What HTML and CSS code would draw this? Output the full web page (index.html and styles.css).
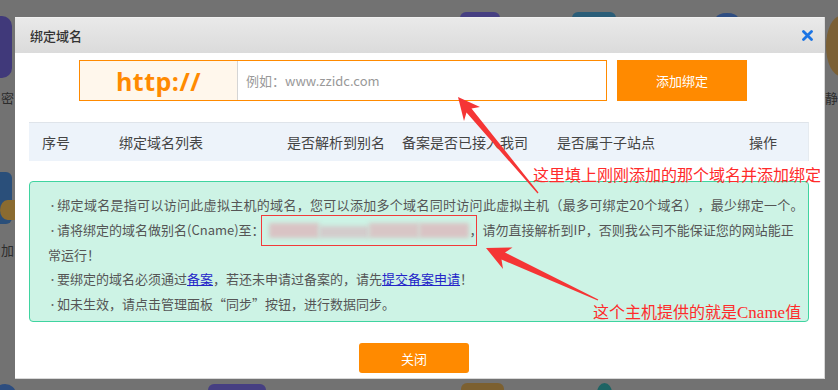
FILE: index.html
```html
<!DOCTYPE html>
<html lang="zh-CN">
<head>
  <meta charset="UTF-8">
  <title>绑定域名</title>
  <link rel="stylesheet" href="styles.css">
</head>
<body>
  <div class="page">
    <!-- dimmed panel icons behind the modal -->
    <div class="backdrop">
      <span class="bg-icon bg-purple-left"></span>
      <span class="bg-text bg-text-mi">密</span>
      <span class="bg-icon bg-blue-left"></span>
      <span class="bg-icon bg-yellow-left"></span>
      <span class="bg-text bg-text-jia">加</span>
      <span class="bg-icon bg-purple-top"></span>
      <span class="bg-icon bg-teal-top"></span>
      <span class="bg-icon bg-blue-top"></span>
      <span class="bg-icon bg-brown-right"></span>
      <span class="bg-text bg-text-jing">静</span>
      <span class="bg-icon bg-blue-bottom"></span>
      <span class="bg-icon bg-purple-bottom"></span>
      <span class="bg-icon bg-brown-bottom"></span>
      <span class="bg-icon bg-teal-bottom"></span>
    </div>

    <div class="dialog">
      <div class="dlg-head">
        <span class="dlg-title">绑定域名</span>
        <svg class="dlg-close" width="11" height="11" viewBox="0 0 11 11">
          <path d="M1.5 1.5 L9.5 9.5 M9.5 1.5 L1.5 9.5" stroke="#1b74e4" stroke-width="2.8" stroke-linecap="round"/>
        </svg>
      </div>

      <div class="dlg-body">
        <div class="bind-row">
          <div class="domain-input">
            <span class="prefix">http://</span>
            <span class="placeholder">例如：www.zzidc.com</span>
          </div>
          <button class="btn-orange btn-add">添加绑定</button>
        </div>

        <div class="list-head">
          <span>序号</span>
          <span>绑定域名列表</span>
          <span>是否解析到别名</span>
          <span>备案是否已接入我司</span>
          <span>是否属于子站点</span>
          <span>操作</span>
        </div>

        <div class="tips">
          <p class="wide"><i class="dot">•</i>绑定域名是指可以访问此虚拟主机的域名，您可以添加多个域名同时访问此虚拟主机（最多可绑定20个域名），最少绑定一个。</p>
          <p><i class="dot">•</i>请将绑定的域名做别名(Cname)至：<span class="cname"><b></b><b></b><b></b><b></b></span>，请勿直接解析到IP，否则我公司不能保证您的网站能正<br>常运行！</p>
          <p><i class="dot">•</i>要绑定的域名必须通过<a href="#">备案</a>，若还未申请过备案的，请先<a href="#">提交备案申请</a>！</p>
          <p><i class="dot">•</i>如未生效，请点击管理面板“同步”按钮，进行数据同步。</p>
        </div>

        <div class="dlg-foot">
          <button class="btn-orange btn-close">关闭</button>
        </div>
      </div>
    </div>

    <!-- red annotations drawn over the screenshot -->
    <svg class="arrows" width="838" height="390" viewBox="0 0 838 390">
      <polygon fill="#f53535" points="458,97 480,107 471.5,108.5 538.5,192.5 537.5,193.5 466.5,112.5 464,121"/>
      <polygon fill="#f53535" points="486,248 512.5,247.5 505,252.5 598.3,299.4 597.7,300.6 501.5,259.5 503,269"/>
    </svg>
    <div class="note note-top">这里填上刚刚添加的那个域名并添加绑定</div>
    <div class="note note-bottom">这个主机提供的就是<span class="latin">Cname</span>值</div>
  </div>
</body>
</html>
```

FILE: styles.css
```css
* {
  box-sizing: border-box;
  margin: 0;
  padding: 0;
}

body {
  background: #727272;
  font-family: "Noto Sans CJK SC", "Noto Sans", sans-serif;
  color: #333;
  text-spacing-trim: space-all;
}

.page {
  position: relative;
  width: 838px;
  height: 390px;
  overflow: hidden;
}

/* background panel, already dimmed by the mask */
.bg-icon,
.bg-text {
  position: absolute;
}

.bg-icon {
  border-radius: 6px;
}

.bg-text {
  font-size: 13px;
  line-height: 15px;
  color: #2c2c2c;
}

.bg-purple-left { left: -10px; top: 16px; width: 22px; height: 62px; background: #40397a; border-radius: 10px; }
.bg-text-mi { left: 1px; top: 90px; }
.bg-blue-left { left: -8px; top: 172px; width: 20px; height: 52px; background: #2a4f7a; }
.bg-yellow-left { left: 0; top: 200px; width: 15px; height: 20px; background: #8a6b30; border-radius: 50% 0 0 50%; }
.bg-text-jia { left: 1px; top: 242px; }
.bg-purple-top { left: 460px; top: 12px; width: 40px; height: 14px; background: #463f82; }
.bg-teal-top { left: 572px; top: 12px; width: 44px; height: 14px; background: #2a5d78; }
.bg-blue-top { left: 716px; top: 13px; width: 22px; height: 10px; background: #2e4d82; border-radius: 50% 50% 0 0; }
.bg-brown-right { left: 826px; top: 16px; width: 30px; height: 60px; background: #7b6035; border-radius: 50%; }
.bg-text-jing { left: 825px; top: 90px; }
.bg-blue-bottom { left: -6px; top: 384px; width: 22px; height: 20px; background: #2d4d7f; border-radius: 50%; }
.bg-purple-bottom { left: 208px; top: 384px; width: 58px; height: 20px; background: #463f82; }
.bg-brown-bottom { left: 461px; top: 383px; width: 43px; height: 20px; background: #7c6030; }
.bg-teal-bottom { left: 597px; top: 383px; width: 15px; height: 20px; background: #1e6464; border-radius: 50%; }

/* modal */
.dialog {
  position: absolute;
  left: 15px;
  top: 17px;
  width: 810px;
  height: 362px;
  background: #fff;
  border-right: 1px solid #d8d8d8;
  border-bottom: 1px solid #d8d8d8;
}

.dlg-head {
  height: 36px;
  padding: 0 11px 0 15px;
  display: flex;
  justify-content: space-between;
  align-items: center;
  background: linear-gradient(#e9e9e9, #dbdbdb);
  border-top: 1px solid #f0f0f0;
}

.dlg-title {
  font-size: 13px;
  font-weight: 500;
  color: #333;
}

.dlg-body {
  padding: 7px 15px 0 14px;
}

.bind-row {
  display: flex;
  gap: 10px;
  margin-left: 50px;
}

.domain-input {
  width: 528px;
  height: 41px;
  border: 1px solid #ff8a00;
  display: flex;
  align-items: center;
}

.prefix {
  width: 158px;
  height: 100%;
  display: flex;
  align-items: center;
  justify-content: center;
  background: #fff7ec;
  border-right: 1px solid #d5d5d5;
  color: #ff8a00;
  font-family: "Open Sans", "Noto Sans", sans-serif;
  font-size: 25px;
  font-weight: 700;
  letter-spacing: 0.5px;
}

.placeholder {
  padding-left: 8px;
  font-size: 13px;
  color: #999;
}

.btn-orange {
  border: none;
  background: #ff8a00;
  color: #fff;
  font-family: "Noto Sans CJK SC", sans-serif;
  font-size: 13px;
}

.btn-add {
  width: 130px;
  height: 41px;
}

.list-head {
  margin-top: 21px;
  height: 39px;
  padding-left: 13px;
  display: grid;
  grid-template-columns: 77px 168px 115px 155px 192px auto;
  align-items: center;
  background: #edf3fa;
  border-top: 1px solid #dfe4ea;
  border-right: 1px solid #e6ebf0;
  font-size: 14px;
  color: #444;
}

.tips {
  margin-top: 20px;
  height: 141px;
  padding: 11px 10px 10px 18px;
  background: #cdf3e5;
  border: 1px solid #3fd4a0;
  border-radius: 4px;
  font-size: 13px;
  line-height: 24px;
  color: #555;
  white-space: nowrap;
}

.tips .wide {
  letter-spacing: 0.3px;
}

.dot {
  font-style: normal;
  font-size: 9px;
  color: #666;
  margin-right: 0;
  vertical-align: 1px;
}

.tips a {
  color: #2424c8;
  text-decoration: underline;
}

.cname {
  display: inline-flex;
  width: 200px;
  height: 15px;
  margin: 0 1px 0 4px;
  vertical-align: -3px;
  outline: 1px solid #f23a3a;
  outline-offset: 7px;
}

.cname b {
  flex: 1;
  background: #d9c3c4;
  filter: blur(2px);
}

.cname b:nth-child(2) {
  background: #d3cccc;
  margin: 3px 0 0;
}

.cname b:nth-child(3) {
  background: #d8c6c6;
}

.dlg-foot {
  margin-top: 21px;
  padding-left: 330px;
}

.btn-close {
  width: 110px;
  height: 30px;
  border-radius: 3px;
}

/* annotations */
.arrows {
  position: absolute;
  left: 0;
  top: 0;
}

.note {
  position: absolute;
  font-size: 16px;
  line-height: 20px;
  color: #ff2b2b;
  white-space: nowrap;
}

.note-top {
  left: 533px;
  top: 164px;
}

.note-bottom {
  left: 593px;
  top: 301px;
}

.latin {
  font-family: "Liberation Serif", serif;
  font-size: 17px;
}
```
